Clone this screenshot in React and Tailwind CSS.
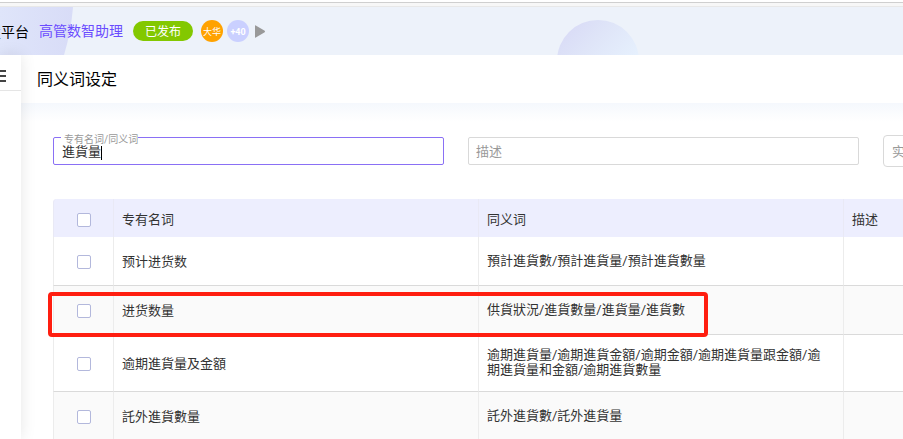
import React, { useState } from 'react';

const rows = [
  { term: '预计进货数', synonyms: '預計進貨數/預計進貨量/預計進貨數量' },
  { term: '进货数量', synonyms: '供貨狀況/進貨數量/進貨量/進貨數' },
  { term: '逾期進貨量及金額', synonyms: '逾期進貨量/逾期進貨金額/逾期金額/逾期進貨量跟金額/逾期進貨量和金額/逾期進貨數量' },
  { term: '託外進貨數量', synonyms: '託外進貨數/託外進貨量' },
];

const Checkbox = ({ label }) => (
  <input
    type="checkbox"
    aria-label={label}
    className="block mx-auto size-3.5 appearance-none rounded-xs border border-[#b3b8dc] bg-white checked:bg-[#6a4cff]"
  />
);

const Header = () => (
  <header className="relative flex h-12 items-center overflow-hidden bg-[#edf2fa] text-sm">
    {/* Background decorative shapes */}
    <svg className="absolute inset-0 h-full w-full" aria-hidden="true">
      <defs>
        <linearGradient id="side" x1="0" y1="0" x2="1" y2="0">
          <stop offset="0" stopColor="#dfe5fa" />
          <stop offset="1" stopColor="#d8dcf7" />
        </linearGradient>
        <linearGradient id="ball" x1="0.1" y1="0.1" x2="0.75" y2="0.75">
          <stop offset="0" stopColor="#d9dbf6" />
          <stop offset="0.4" stopColor="#dfe5f8" />
          <stop offset="1" stopColor="#e7f2fe" />
        </linearGradient>
      </defs>
      <path d="M0 0H73Q71 25 64 48H0Z" fill="url(#side)" />
      <circle cx="598" cy="54" r="41" fill="url(#ball)" />
    </svg>
    <div className="relative flex items-center">
      <div className="flex w-[29px] justify-end overflow-hidden pt-0.5 whitespace-nowrap text-black">置平台</div>
      <a href="#assistant" className="ml-2.5 text-[#6a4cff]">高管数智助理</a>
      <span className="ml-2.5 flex h-5 w-[60px] items-center justify-center rounded-full bg-[#83c800] pt-0.5 text-xs text-white">
        已发布
      </span>
      <span className="ml-2 flex size-[22px] items-center justify-center rounded-full bg-[#ffa200] pt-0.5 text-[9px] text-white">
        大华
      </span>
      <span className="ml-1 flex size-[22px] items-center justify-center rounded-full bg-[#cad0ff] pt-0.5 text-[9px] font-bold text-white">
        +40
      </span>
      <button type="button" aria-label="展开" className="ml-1.5">
        <svg width="11" height="13" viewBox="0 0 11 13" fill="#999">
          <path d="M0 0.8 Q0 0 0.8 0.4 L9.7 5.8 Q10.5 6.5 9.7 7.2 L0.8 12.6 Q0 13 0 12.2Z" />
        </svg>
      </button>
    </div>
  </header>
);

const Sidebar = () => (
  <aside className="z-10 w-[21px] shrink-0 bg-white shadow-[0_0_16px_rgba(0,0,0,0.1)]">
    <div className="h-9 border-b border-[#e5e5e5] pt-[15px]">
      <button type="button" aria-label="菜单" className="block">
        <svg width="6" height="12" viewBox="0 0 6 12" stroke="#444" strokeWidth="2">
          <path d="M0 1H6M0 6H6M0 11H6" />
        </svg>
      </button>
    </div>
  </aside>
);

const Filters = () => {
  const [keyword, setKeyword] = useState('進貨量');

  return (
    <div className="flex items-center gap-6">
      <div className="relative flex h-7 w-[391px] shrink-0 items-center rounded-xs border border-[#8a70f5] px-2">
        <label
          htmlFor="keyword"
          className="absolute -top-1 left-[7px] bg-white pl-[3px] text-[10px] leading-3 text-[#999]"
        >
          专有名词/同义词
        </label>
        <input
          id="keyword"
          value={keyword}
          onChange={(e) => setKeyword(e.target.value)}
          className="relative field-sizing-content pt-0.5 leading-5 text-[#333] caret-transparent outline-none"
        />
        <span className="mt-0.5 h-4 w-px bg-black" />
      </div>
      <input
        aria-label="描述"
        placeholder="描述"
        className="h-7 w-[391px] shrink-0 rounded-xs border border-[#d9d9d9] px-[7px] outline-none placeholder:text-[#999]"
      />
      <input
        aria-label="实体"
        placeholder="实体"
        className="h-8 w-[391px] shrink-0 rounded border border-[#d9d9d9] px-2 outline-none placeholder:text-[#999]"
      />
    </div>
  );
};

const SynonymTable = () => (
  <div className="relative mt-8">
    <table className="w-full table-fixed border-separate border-spacing-0 text-left leading-[15px] text-[#333]">
      <colgroup>
        <col className="w-[61px]" />
        <col className="w-[365px]" />
        <col className="w-[365px]" />
        <col />
      </colgroup>
      <thead>
        <tr className="h-[38px] bg-[#edeefe]">
          <th className="rounded-tl border-x border-[#e9e9f5] pt-1"><Checkbox label="全选" /></th>
          <th className="border-r border-[#e9e9f5] px-2 pt-0.5 font-normal">专有名词</th>
          <th className="border-r border-[#e9e9f5] px-2 pt-0.5 font-normal">同义词</th>
          <th className="px-2 pt-0.5 font-normal">描述</th>
        </tr>
      </thead>
      <tbody>
        {rows.map((row) => (
          <tr key={row.term} className="h-[49px] even:bg-[#fafafa]">
            <td className="border-x border-b border-x-[#ececec] border-b-[#dadada] pt-0.5"><Checkbox label={row.term} /></td>
            <td className="border-r border-b border-r-[#ececec] border-b-[#dadada] px-2">{row.term}</td>
            <td className="border-r border-b border-r-[#ececec] border-b-[#dadada] pt-3 pr-5 pb-3.5 pl-2 break-all">{row.synonyms}</td>
            <td className="border-b border-[#dadada]" />
          </tr>
        ))}
      </tbody>
    </table>
    {/* highlight around the matched row */}
    <div className="pointer-events-none absolute top-[93px] -left-[5px] h-[45px] w-[660px] rounded border-4 border-[#ff1e10]" />
  </div>
);

const App = () => (
  <div className="flex h-screen flex-col overflow-hidden bg-white font-['Roboto','Noto_Sans_CJK_SC',sans-serif] text-[13px]">
    <div className="mt-0.5 h-[5px] shrink-0 border-t border-b border-t-[#cfcfcf] border-b-[#e8e8e8] bg-[#f7f7f7]" />
    <Header />
    <div className="flex min-h-0 flex-1">
      <Sidebar />
      <main className="min-w-0 flex-1 overflow-hidden">
        <h1 className="flex h-12 items-center px-4 pt-0.5 text-base text-black">同义词设定</h1>
        <div className="h-full bg-linear-to-b from-[#f5f8fd] to-white to-5% pt-8 pl-8">
          <Filters />
          <SynonymTable />
        </div>
      </main>
    </div>
  </div>
);

export default App;
